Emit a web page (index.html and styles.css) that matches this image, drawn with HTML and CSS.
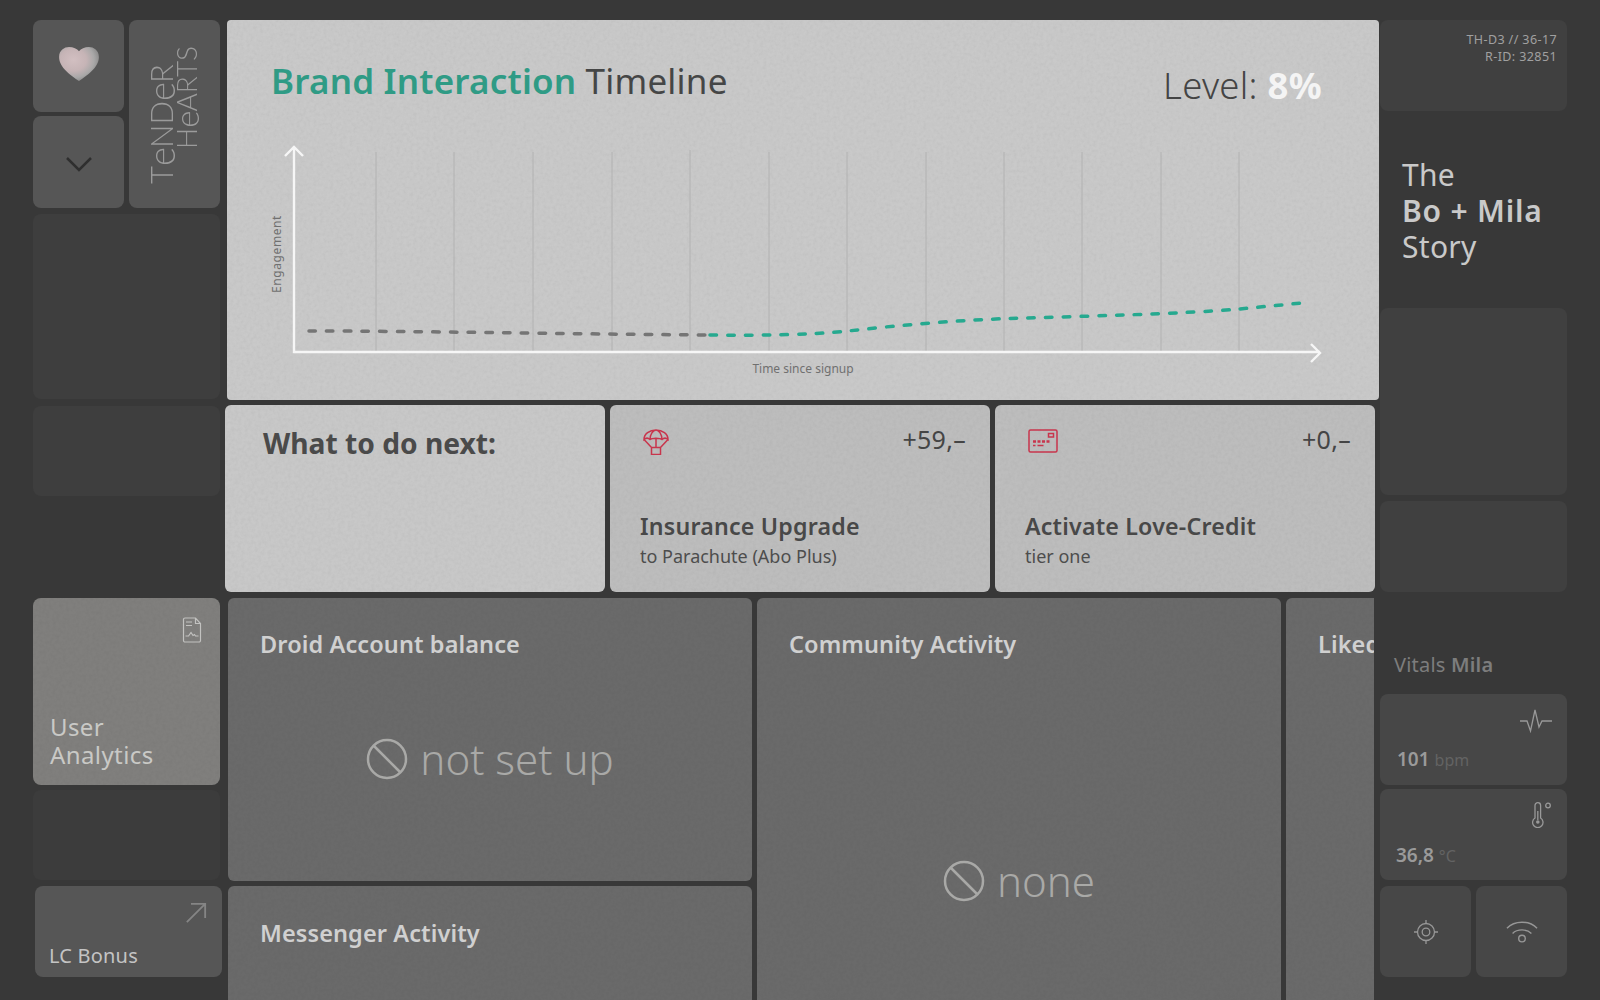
FILE: index.html
```html
<!DOCTYPE html>
<html lang="en">
<head>
<meta charset="utf-8">
<title>Tender Hearts</title>
<link rel="stylesheet" href="styles.css">
</head>
<body>
<svg class="defs" width="0" height="0" aria-hidden="true">
  <defs>
    <radialGradient id="hg" cx="36%" cy="38%" r="72%">
      <stop offset="0" stop-color="#d2bfc1"/>
      <stop offset=".45" stop-color="#c6b4b6"/>
      <stop offset=".72" stop-color="#a9a8a8"/>
      <stop offset="1" stop-color="#7f7e7e"/>
    </radialGradient>
  </defs>
</svg>
<div class="page">
  <aside class="left">
    <div class="brand">
      <div class="brand-btns">
        <div class="tile square center">
          <svg class="heart" viewBox="0 0 44 38"><path fill="url(#hg)" d="M22 37C14 31 1 23 1 11.500 1 4.500 6.500 1 11.500 1 16 1 20 3 22 5.500 24 3 28 1 32.500 1 37.500 1 43 4.500 43 11.500 43 23 30 31 22 37Z"/></svg>
        </div>
        <div class="tile square center">
          <svg class="chev" viewBox="0 0 28 16"><path d="M2 2l12 12L26 2"/></svg>
        </div>
      </div>
      <div class="tile logo">
        <div class="logo-text"><span class="l1">T<i>e</i>ND<i>e</i>R</span><span class="l2">H<i>e</i>ARTS</span></div>
      </div>
    </div>
    <div class="ghost g1"></div>
    <div class="ghost g2"></div>
    <div class="analytics tex">
      <svg class="doc" viewBox="0 0 20 26"><path d="M1.500 2.500a1.500 1.500 0 0 1 1.500-1.500h10.500l5 5.500v17a1.500 1.500 0 0 1-1.500 1.500H3a1.500 1.500 0 0 1-1.500-1.500zM13.500 1v5.500h5M4 5h6M4 8.500h6M3.500 19h3l2.500-3.500 2 3 1.500-1 1 1.500h3"/></svg>
      <div class="analytics-label">User<br>Analytics</div>
    </div>
    <div class="ghost g3"></div>
    <div class="bonus">
      <svg class="arrow" viewBox="0 0 24 24"><path d="M2 22L22 2M6.500 2H22v15.500"/></svg>
      <div class="bonus-label">LC Bonus</div>
    </div>
  </aside>

  <main class="main">
    <section class="chart tex">
      <header class="chart-head">
        <h1 class="chart-title"><b>Brand Interaction</b> Timeline</h1>
        <div class="level">Level: <b>8%</b></div>
      </header>
      <svg class="plot" viewBox="227 120 1152 280">
        <g class="grid">
          <path d="M376 152V351M454 152V351M533 152V351M612 152V351M690 150V351M769 152V351M847 152V351M926 152V351M1004 152V351M1082 152V351M1161 152V351M1239 152V351"/>
        </g>
        <path class="axis" d="M285 156L294 147L303 156M294 147V352H1320M1311 344L1320 353L1311 362"/>
        <path class="dash grey" d="M309 331C420 331 560 334 710 335"/>
        <path class="dash green" d="M710 335C760 335.500 810 335 848 331C900 325 960 320 1010 318.500C1090 316 1180 314 1239 309L1302 303"/>
        <text class="ax-y" transform="translate(281 254) rotate(-90)">Engagement</text>
        <text class="ax-x" x="803" y="373">Time since signup</text>
      </svg>
    </section>

    <section class="next">
      <div class="next-card intro tex"><h2>What to do next:</h2></div>
      <div class="next-card tex">
        <div class="next-top">
          <svg class="red" viewBox="0 0 26 26"><path d="M1 10.500C1 5 6.500 1 13 1s12 4 12 9.500c-2-1.800-4-1.800-6 0-2-1.800-10-1.800-12 0-2-1.800-4-1.800-6 0zM7 10.500c0-5 3-9.500 6-9.500s6 4.500 6 9.500M1.500 11l7.500 8M24.500 11l-7.500 8M8.500 18.500h9v7h-9zM13 10v8.500"/></svg>
          <span class="price">+59,–</span>
        </div>
        <h3>Insurance Upgrade</h3>
        <p>to Parachute (Abo Plus)</p>
      </div>
      <div class="next-card tex">
        <div class="next-top">
          <svg class="red wide" viewBox="0 0 30 24"><path d="M2.500 1h25A1.500 1.500 0 0 1 29 2.500v19a1.500 1.500 0 0 1-1.500 1.500h-25A1.500 1.500 0 0 1 1 21.500v-19A1.500 1.500 0 0 1 2.500 1zM20.500 4.500h5v3.500h-5z"/><path class="thick" d="M5 12.500h3M9.500 12.500h3M14 12.500h3M18.500 12.500h3"/><path d="M5 16.500h2.500M9.500 16.500h6"/></svg>
          <span class="price">+0,–</span>
        </div>
        <h3>Activate Love-Credit</h3>
        <p>tier one</p>
      </div>
    </section>

    <section class="lower">
      <div class="lower-col">
        <div class="panel droid tex">
          <h4>Droid Account balance</h4>
          <div class="empty setup">
            <svg class="ban" viewBox="0 0 42 42"><circle cx="21" cy="21" r="19"/><path d="M7.500 7.500l27 27"/></svg>
            <span>not set up</span>
          </div>
        </div>
        <div class="panel messenger tex"><h4>Messenger Activity</h4></div>
      </div>
      <div class="panel community tex">
        <h4>Community Activity</h4>
        <div class="empty none">
          <svg class="ban" viewBox="0 0 42 42"><circle cx="21" cy="21" r="19"/><path d="M7.500 7.500l27 27"/></svg>
          <span>none</span>
        </div>
      </div>
      <div class="panel liked tex"><h4>Liked Items</h4></div>
    </section>
  </main>

  <aside class="right">
    <div class="rtile meta">TH-D3 // 36-17<br>R-ID: 32851</div>
    <div class="story">The<br><b>Bo + Mila</b><br>Story</div>
    <div class="rtile r1"></div>
    <div class="rtile r2"></div>
    <div class="vitals-title">Vitals <b>Mila</b></div>
    <div class="vital">
      <svg class="ic pulse" viewBox="0 0 32 24"><path d="M0 12h7l3.500 10L15 1l4 17 3-6h10"/></svg>
      <div class="val"><b>101</b> <span>bpm</span></div>
    </div>
    <div class="vital">
      <svg class="ic temp" viewBox="0 0 20 26"><path d="M3 3.500a2.800 2.800 0 0 1 5.600 0v12.500a5.200 5.200 0 1 1-5.600 0z"/><circle class="fill" cx="5.800" cy="20" r="1.800"/><path d="M5.800 9v9"/><circle cx="16" cy="3.500" r="2.300"/></svg>
      <div class="val t"><b>36,8</b> <span>°C</span></div>
    </div>
    <div class="vital-row">
      <div class="rsmall center">
        <svg class="ic2" viewBox="0 0 26 26"><circle cx="13" cy="13" r="8.500"/><circle cx="13" cy="13" r="3.800"/><path d="M13 1v3.500M13 21.500V25M1 13h3.500M21.500 13H25"/></svg>
      </div>
      <div class="rsmall center">
        <svg class="ic3" viewBox="0 0 34 24"><path d="M1 8C9-.5 25-.5 33 8M7 13.500c5-5 15-5 20 0"/><circle cx="17" cy="19" r="3.500"/></svg>
      </div>
    </div>
  </aside>
</div>
</body>
</html>
```

FILE: styles.css
```css
:root {
  --noise: url("data:image/svg+xml,%3Csvg xmlns='http://www.w3.org/2000/svg' width='400' height='400'%3E%3Cfilter id='n'%3E%3CfeTurbulence type='fractalNoise' baseFrequency='.3' numOctaves='3' stitchTiles='stitch'/%3E%3CfeColorMatrix values='0 0 0 0 0 0 0 0 0 0 0 0 0 0 0 0 0 0 .06 -.02'/%3E%3C/filter%3E%3Crect width='400' height='400' filter='url(%23n)'/%3E%3C/svg%3E");
}
* { box-sizing: border-box; }
html, body { margin: 0; height: 100%; }
body {
  background: #383838;
  font-family: "Noto Sans", "Open Sans", sans-serif;
  overflow: hidden;
}
.defs { position: absolute; }
.page {
  display: flex;
  width: 1600px;
  height: 1000px;
  padding: 20px 0 0 33px;
  overflow: hidden;
}
.center { display: flex; align-items: center; justify-content: center; }
.tex { background-image: var(--noise); }

/* left */
.left { width: 194px; flex: none; display: flex; flex-direction: column; }
.brand { display: flex; gap: 5px; width: 187px; }
.brand-btns { display: flex; flex-direction: column; gap: 4px; }
.tile { background-color: #565656; border-radius: 8px; }
.square { width: 91px; height: 92px; }
.heart { width: 42px; height: 36px; margin-top: -5px; }
.chev { width: 28px; height: 16px; margin-top: 4px; fill: none; stroke: #2f2f2f; stroke-width: 2.500; }
.logo { width: 91px; height: 188px; position: relative; overflow: hidden; }
.logo-text {
  position: absolute;
  left: 20px;
  bottom: 24px;
  writing-mode: vertical-rl;
  transform: rotate(180deg);
  font-family: "Lato", sans-serif;
  font-weight: 300;
  font-size: 31px;
  line-height: 25px;
  color: #9b9b9b;
  white-space: nowrap;
}
.logo-text i { font-style: normal; font-size: 1.18em; letter-spacing: -1px; }
.logo-text span { display: block; }
.logo-text .l2 { padding-top: 35px; font-size: 28px; }
.ghost { width: 187px; background-color: #3e3e3e; border-radius: 8px; }
.g1 { height: 185px; margin-top: 6px; }
.g2 { height: 90px; margin-top: 7px; }
.g3 { height: 90px; margin-top: 5px; background-color: #3c3c3c; }
.analytics {
  width: 187px; height: 187px; margin-top: 102px;
  background-color: #807f7d;
  border-radius: 8px;
  position: relative;
  display: flex; align-items: flex-end;
  padding: 0 17px 17px;
}
.analytics-label { font-size: 24px; line-height: 27.500px; letter-spacing: .4px; color: #c9c9c6; }
.doc { position: absolute; right: 18px; top: 19px; width: 20px; height: 26px; fill: none; stroke: #c2c2c0; stroke-width: 1.200; }
.bonus {
  width: 187px; height: 91px; margin: 6px 0 0 2px;
  background-color: #565656;
  border-radius: 8px;
  position: relative;
  display: flex; align-items: flex-end;
  padding: 0 14px 8px;
}
.bonus-label { font-size: 20px; letter-spacing: .2px; color: #c4c4c4; }
.arrow { position: absolute; right: 15px; top: 16px; width: 22px; height: 22px; fill: none; stroke: #858585; stroke-width: 2; }

/* main */
.main { width: 1155px; flex: none; display: flex; flex-direction: column; }
.chart {
  width: 1152px; height: 380px;
  background-color: #c9c9c9;
  border-radius: 4px;
  position: relative;
}
.chart-head {
  height: 100px;
  display: flex; justify-content: space-between; align-items: flex-start;
  padding: 36px 57px 0 44px;
}
.chart-title { margin: 0; font-size: 35px; line-height: 50px; font-weight: 400; color: #454646; letter-spacing: .2px; }
.chart-title b { font-weight: 600; color: #2f9b85; }
.level { font-size: 36.500px; line-height: 50px; font-weight: 300; color: #444; padding-top: 4px; letter-spacing: .3px; }
.level b { font-weight: 700; color: #f4f4f4; }
.plot { display: block; width: 1152px; height: 280px; }
.grid path { stroke: #b2b2b2; stroke-width: 1; fill: none; }
.axis { fill: none; stroke: #f6f6f6; stroke-width: 2.400; }
.dash { fill: none; stroke-width: 3.500; stroke-dasharray: 6.500 11.200; stroke-linecap: round; }
.grey { stroke: #757575; }
.green { stroke: #26a98f; }
.ax-y, .ax-x { font-family: "Noto Sans", sans-serif; font-size: 12px; fill: #707070; }
.ax-y { text-anchor: middle; letter-spacing: .6px; }
.ax-x { text-anchor: middle; }

.next { display: flex; gap: 5px; margin: 5px 0 0 -2px; }
.next-card {
  width: 380px; height: 187px;
  background-color: #bdbdbd;
  border-radius: 6px;
  padding: 24px 24px 0 30px;
  color: #444;
}
.next-card.intro { background-color: #c8c8c8; padding: 20px 38px; }
.intro h2 { margin: 0; font-size: 28.200px; line-height: 36px; font-weight: 700; color: #4a4a4a; }
.next-top { display: flex; justify-content: space-between; align-items: flex-start; height: 80px; }
.red { width: 26px; height: 26px; fill: none; stroke: #c8354c; stroke-width: 1.500; margin-left: 3px; }
.red.wide { width: 30px; height: 24px; margin-left: 3px; }
.thick { stroke-width: 2.500; }
.price { font-size: 25px; line-height: 26px; color: #454545; margin-top: -3px; letter-spacing: .3px; }
.next-card h3 { margin: 0; font-size: 23.200px; line-height: 34px; font-weight: 600; color: #484848; letter-spacing: .2px; }
.next-card p { margin: 1px 0 0; font-size: 18px; line-height: 24px; color: #4d4d4d; }

.lower { display: flex; gap: 5px; margin: 6px 0 0 1px; width: 1146px; overflow: hidden; flex: none; }
.lower-col { display: flex; flex-direction: column; gap: 5px; flex: none; }
.panel { background-color: #6a6a6a; border-radius: 6px; padding: 28px 32px; flex: none; width: 524px; }
.panel h4 { margin: 0; font-size: 23.500px; line-height: 36px; font-weight: 600; color: #d0d0d0; white-space: nowrap; letter-spacing: .1px; }
.droid { height: 283px; }
.messenger { height: 200px; padding-top: 29px; }
.community { height: 500px; }
.liked { width: 300px; }
.empty { display: flex; align-items: center; justify-content: center; gap: 12px; color: #a9a9a7; font-size: 42px; line-height: 50px; font-weight: 300; }
.ban { width: 42px; height: 42px; fill: none; stroke: #a9a9a7; stroke-width: 2.500; flex: none; }
.setup { margin-top: 72px; }
.none { margin-top: 194px; }

/* right */
.right { width: 187px; flex: none; display: flex; flex-direction: column; margin-left: -2px; }
.rtile { background-color: #404040; border-radius: 8px; }
.meta { height: 91px; padding: 11px 10px; text-align: right; font-size: 12.500px; line-height: 17px; letter-spacing: .4px; color: #a0a0a0; }
.story { margin-top: 46px; padding-left: 22px; font-size: 30px; line-height: 36px; font-weight: 400; color: #c9c9c9; height: 151px; letter-spacing: .3px; }
.story b { font-weight: 600; letter-spacing: .8px; }
.r1 { height: 187px; }
.r2 { height: 91px; margin-top: 6px; }
.vitals-title { margin-top: 59px; padding-left: 14px; font-size: 20px; line-height: 28px; color: #7d7d7d; height: 43px; letter-spacing: .2px; }
.vitals-title b { font-weight: 600; }
.vital { height: 91px; background-color: #474747; border-radius: 8px; position: relative; margin-bottom: 4px; }
.ic { position: absolute; fill: none; stroke: #999; stroke-width: 1.300; }
.pulse { right: 15px; top: 15px; width: 32px; height: 24px; }
.temp { right: 15px; top: 13px; width: 20px; height: 26px; }
.fill { fill: #999; stroke: none; }
.val { position: absolute; left: 17px; top: 51px; font-size: 19px; line-height: 28px; color: #9a9a9a; }
.val b { font-weight: 600; }
.val span { font-size: 16px; color: #636363; margin-left: 0; font-weight: 400; }
.val.t { left: 16px; top: 52px; }
.vital-row { display: flex; gap: 5px; margin-top: 2px; }
.rsmall { width: 91px; height: 91px; background-color: #474747; border-radius: 8px; }
.ic2 { width: 26px; height: 26px; fill: none; stroke: #979797; stroke-width: 1.300; }
.ic3 { width: 32px; height: 24px; fill: none; stroke: #979797; stroke-width: 1.500; }
```
